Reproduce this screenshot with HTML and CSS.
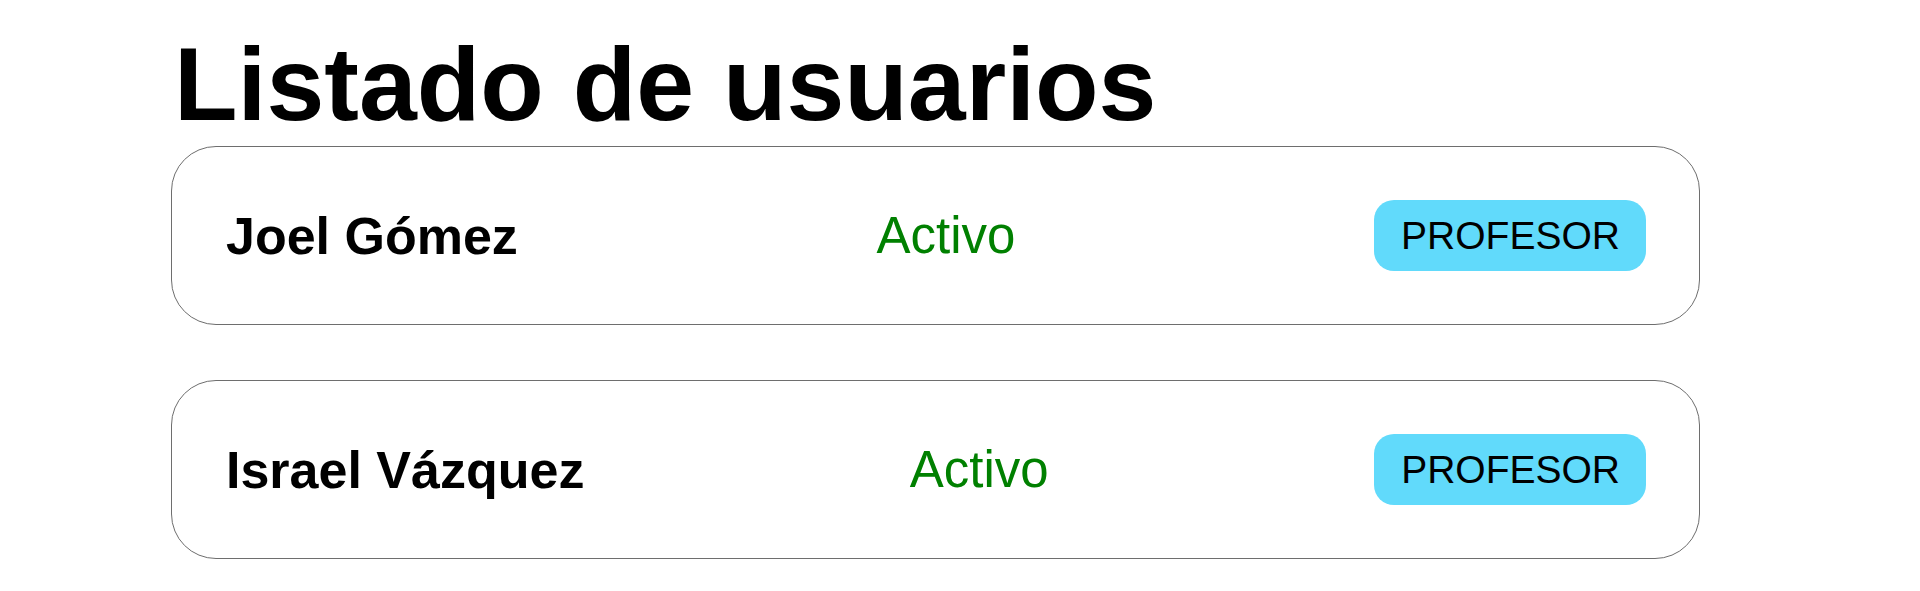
FILE: index.html
```html
<!DOCTYPE html>
<html lang="es">
<head>
<meta charset="utf-8">
<title>Listado de usuarios</title>
<link rel="stylesheet" href="styles.css">
</head>
<body>
  <main class="page">
    <h1 class="title">Listado de usuarios</h1>
    <ul class="user-list">
      <li class="user-card">
        <span class="user-name">Joel Gómez</span>
        <span class="user-status">Activo</span>
        <span class="user-role">PROFESOR</span>
      </li>
      <li class="user-card">
        <span class="user-name">Israel Vázquez</span>
        <span class="user-status">Activo</span>
        <span class="user-role">PROFESOR</span>
      </li>
    </ul>
  </main>
</body>
</html>
```

FILE: styles.css
```css
html, body {
  margin: 0;
  padding: 0;
  background: #ffffff;
}

body {
  font-family: "Liberation Sans", Arial, sans-serif;
  color: #000000;
}

.page {
  margin-left: 171px;
  width: 1529px;
}

.title {
  margin: 24px 0 2px;
  padding-left: 3px;
  font-size: 104px;
  line-height: 120px;
  font-weight: bold;
}

.user-list {
  list-style: none;
  margin: 0;
  padding: 0;
  display: flex;
  flex-direction: column;
  gap: 55px;
}

.user-card {
  display: flex;
  align-items: center;
  justify-content: space-between;
  padding: 53px 53px 53px 54px;
  border: 1px solid #6e6e6e;
  border-radius: 45px;
}

.user-name {
  font-size: 52px;
  font-weight: bold;
}

.user-status {
  font-size: 51px;
  color: #008000;
}

.user-role {
  display: inline-flex;
  align-items: center;
  height: 71px;
  padding: 0 26px 0 27px;
  font-size: 39px;
  background: #61dafb;
  border-radius: 20px;
}
```
